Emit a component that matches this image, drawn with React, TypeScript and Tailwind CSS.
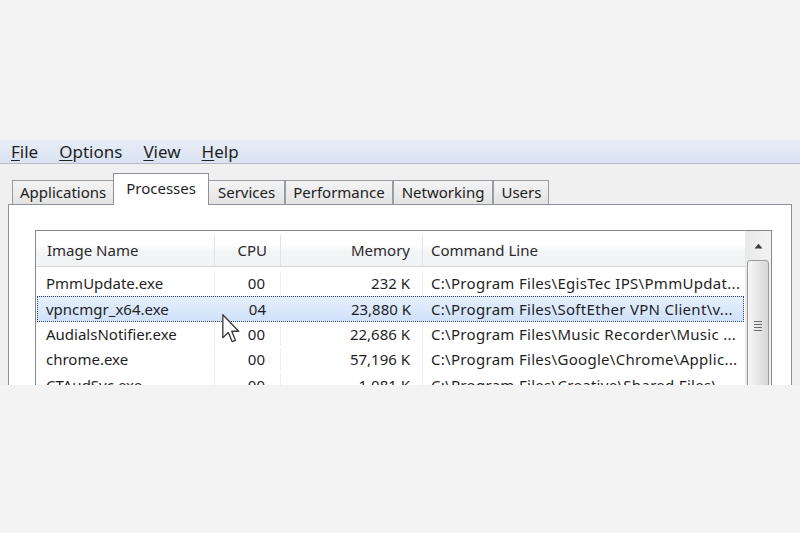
import React from 'react';

const rows = [
  { name: 'PmmUpdate.exe', cpu: '00', mem: '232 K', cmd: 'C:\\Program Files\\EgisTec IPS\\PmmUpdat...' },
  { name: 'vpncmgr_x64.exe', cpu: '04', mem: '23,880 K', cmd: 'C:\\Program Files\\SoftEther VPN Client\\v...', selected: true },
  { name: 'AudialsNotifier.exe', cpu: '00', mem: '22,686 K', cmd: 'C:\\Program Files\\Music Recorder\\Music ...' },
  { name: 'chrome.exe', cpu: '00', mem: '57,196 K', cmd: 'C:\\Program Files\\Google\\Chrome\\Applic...' },
  { name: 'CTAudSvc.exe', cpu: '00', mem: '1,081 K', cmd: 'C:\\Program Files\\Creative\\Shared Files\\...' },
];

// tab label + horizontal padding class
const tabs = [
  { label: 'Applications', pad: 'px-[7px]' },
  { label: 'Processes', pad: 'px-[12px]' },
  { label: 'Services', pad: 'px-[9px]' },
  { label: 'Performance', pad: 'px-[7px]' },
  { label: 'Networking', pad: 'px-[8px]' },
  { label: 'Users', pad: 'px-[7px]' },
];

function MenuItem({ first, rest }: { first: string; rest: string }) {
  return (
    <span>
      <span className="underline decoration-1 underline-offset-2">{first}</span>
      {rest}
    </span>
  );
}

function Cursor() {
  return (
    <svg className="absolute left-[222px] top-[314px]" width="18" height="29" viewBox="0 0 12 19.5">
      <path
        d="M0.5 0.5 L0.5 16 L4.2 12.4 L6.8 18.6 L9 17.7 L6.5 11.6 L11.2 11.6 Z"
        fill="#ffffff"
        stroke="#3a3a3a"
        strokeWidth="0.9"
        strokeLinejoin="round"
      />
    </svg>
  );
}

export default function App() {
  return (
    <div className="relative flex h-[533px] w-[800px] flex-col overflow-hidden bg-[#f3f3f3] pt-[140px] font-['Noto_Sans',sans-serif] text-[15px] text-[#1f1f1f]">
      <div className="flex h-[245px] flex-col overflow-hidden bg-[#f0f0f0]">
        {/* menu bar */}
        <div className="flex h-[24px] shrink-0 items-center gap-[21px] border-b border-[#b7bcc5] bg-gradient-to-b from-[#e8eef8] to-[#d9e2f1] pl-[11px] text-[17px] leading-none">
          <MenuItem first="F" rest="ile" />
          <MenuItem first="O" rest="ptions" />
          <MenuItem first="V" rest="iew" />
          <MenuItem first="H" rest="elp" />
        </div>

        {/* tabs */}
        <div className="mt-[9px] flex h-[31px] shrink-0 items-end pl-[12px] pr-2">
          {tabs.map((t) =>
            t.label === 'Processes' ? (
              <div
                key={t.label}
                className={`relative z-10 -mb-px -mx-[1px] flex h-[32px] items-start border border-b-0 border-[#8d9099] bg-white pt-[3px] ${t.pad}`}
              >
                {t.label}
              </div>
            ) : (
              <div
                key={t.label}
                className={`flex h-[24px] items-center border border-b-0 border-[#9a9ca3] bg-gradient-to-b from-[#f4f4f4] to-[#e3e3e3] text-[#222] ${t.pad}`}
              >
                {t.label}
              </div>
            )
          )}
        </div>

        {/* panel */}
        <div className="mx-[8px] flex-1 border border-[#8d9099] bg-white pl-[26px] pr-[19px] pt-[25px]">
          <div className="flex h-[300px] border border-[#828790] bg-white">
            <div className="flex-1">
              {/* header */}
              <div className="grid h-[36px] grid-cols-[179px_66px_142px_1fr] border-b border-[#d5d5d5] bg-gradient-to-b from-white from-40% to-[#f3f4f6] to-60% pt-[4px] text-[#2b2b2b]">
                <div className="flex items-center border-r border-[#e2e3e6] pl-[11px]">Image Name</div>
                <div className="flex items-center justify-end border-r border-[#e2e3e6] pr-[13px]">CPU</div>
                <div className="flex items-center justify-end border-r border-[#e2e3e6] pr-[12px]">Memory</div>
                <div className="flex items-center pl-[8px]">Command Line</div>
              </div>
              {/* rows */}
              <div className="pt-[4px]">
                {rows.map((r) => (
                  <div
                    key={r.name}
                    className={
                      r.selected
                        ? 'mx-[1px] grid h-[25.3px] grid-cols-[177px_66px_142px_1fr] border border-dotted border-[#2f3f66] bg-gradient-to-b from-[#e6f0fd] to-[#cfe1f9]'
                        : 'mx-[1px] grid h-[25.3px] grid-cols-[177px_66px_142px_1fr] border border-transparent'
                    }
                  >
                    <div className={`flex items-center pl-[8px] ${r.selected ? '' : 'border-r border-[#eeeeee]'}`}>{r.name}</div>
                    <div className={`flex items-center justify-end pr-[15px] ${r.selected ? '' : 'border-r border-[#eeeeee]'}`}>{r.cpu}</div>
                    <div className={`flex items-center justify-end pr-[12px] ${r.selected ? '' : 'border-r border-[#eeeeee]'}`}>{r.mem}</div>
                    <div className="flex items-center overflow-hidden whitespace-nowrap pl-[8px] tracking-[0.3px]">{r.cmd}</div>
                  </div>
                ))}
              </div>
            </div>

            {/* scrollbar */}
            <div className="flex w-[26px] flex-col bg-gradient-to-r from-[#e9e9e9] to-[#f3f3f3]">
              <div className="flex h-[28px] items-center justify-center pt-[1px]">
                <svg width="9" height="6" viewBox="0 0 9 6">
                  <path d="M0.5 5.5 L4.5 0.8 L8.5 5.5 Z" fill="#3c3c3c" />
                </svg>
              </div>
              <div className="mx-[2px] mt-[1px] flex flex-1 flex-col items-center rounded-[3px] border border-[#9c9c9c] bg-gradient-to-r from-[#f5f5f5] via-[#e8e8e8] to-[#d6d6d6] pt-[60px]">
                <div className="flex flex-col gap-[2px]">
                  <div className="h-px w-[8px] bg-[#6b6b6b]" />
                  <div className="h-px w-[8px] bg-[#6b6b6b]" />
                  <div className="h-px w-[8px] bg-[#6b6b6b]" />
                  <div className="h-px w-[8px] bg-[#6b6b6b]" />
                </div>
              </div>
            </div>
          </div>
        </div>
      </div>
      <Cursor />
    </div>
  );
}
